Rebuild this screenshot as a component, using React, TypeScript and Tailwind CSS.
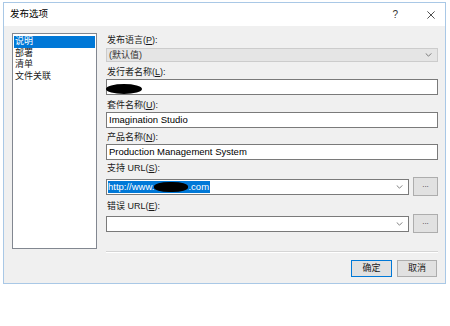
// App.tsx
// A Windows-style "发布选项" dialog: title bar, a page list on the left and the form fields on the right.
const FONT = { fontFamily: '"Liberation Sans", "Noto Sans CJK SC", sans-serif' };

const Chevron = () => (
  <svg viewBox="0 0 8 5" className="h-[4px] w-[7px]" fill="none" stroke="#606060" strokeWidth="1">
    <path d="M0.5 0.5 4 4 7.5 0.5" />
  </svg>
);

// Label with an access-key letter underlined, e.g. 发布语言(P):
const Label = ({ pre, k, className = "" }: { pre: string; k: string; className?: string }) => (
  <div className={`flex h-[13px] items-center pl-[1px] text-[9px] leading-none text-[#1a1a1a] ${className}`}>
    {pre}(<span className="underline">{k}</span>):
  </div>
);

const TextBox = ({ children, className = "" }: { children?: React.ReactNode; className?: string }) => (
  <div className={`relative flex h-[16px] items-center border border-[#7a7a7a] bg-white px-[2px] text-[9.5px] leading-none text-black ${className}`}>
    {children}
  </div>
);

const Browse = () => (
  <div className="flex h-[19px] w-[25px] shrink-0 items-center justify-center border border-[#adadad] bg-[#e1e1e1] pb-[3px] text-[8px] text-[#333]">
    ...
  </div>
);

const PAGES = ["说明", "部署", "清单", "文件关联"];

export default function App() {
  return (
    <div className="h-[326px] w-[450px] bg-white" style={FONT}>
      <div className="ml-[3px] pt-[2px]">
        <div className="flex h-[282px] w-[443px] flex-col border border-[#a9c8e6] bg-[#f0f0f0]">
          {/* Title bar */}
          <div className="flex h-[23px] shrink-0 items-center bg-white pl-[6px] text-[9.5px] text-black">
            <span>发布选项</span>
            <span className="ml-auto mr-[29px] text-[10px] text-[#333]">?</span>
            <svg viewBox="0 0 10 10" className="mr-[10px] h-[8px] w-[8px]" stroke="#222" strokeWidth="1">
              <path d="M0.5 0.5 9.5 9.5M9.5 0.5 0.5 9.5" />
            </svg>
          </div>

          <div className="flex flex-1 pl-[8px] pr-[7px] pt-[7px]">
            {/* Page list */}
            <div className="h-[216px] w-[85px] shrink-0 border border-[#828790] bg-white p-[1px] pt-[2px] text-[9px] leading-none">
              {PAGES.map((p, i) => (
                <div
                  key={p}
                  className={`flex h-[11.5px] items-center pl-[1px] ${i === 0 ? "bg-[#0078d7] text-white" : "text-[#1a1a1a]"}`}
                >
                  {p}
                </div>
              ))}
            </div>

            {/* Form */}
            <div className="ml-[9px] flex flex-1 flex-col pt-[1px]">
              <Label pre="发布语言" k="P" />
              <div className="mt-[1px] flex h-[14px] items-center justify-between border border-[#cccccc] bg-[#e5e5e5] pl-[2px] pr-[5px] text-[9px] leading-none text-[#333]">
                <span>(默认值)</span>
                <Chevron />
              </div>

              <Label pre="发行者名称" k="L" className="mt-[4px]" />
              <TextBox>
                <span className="absolute bottom-[0px] left-[-1px] h-[10px] w-[36px] rounded-[50%] bg-black" />
              </TextBox>

              <Label pre="套件名称" k="U" className="mt-[4px]" />
              <TextBox>Imagination Studio</TextBox>

              <Label pre="产品名称" k="N" className="mt-[3px]" />
              <TextBox>Production Management System</TextBox>

              <Label pre="支持 URL" k="S" className="mt-[2px]" />
              <div className="mt-[2px] flex h-[19px] items-center gap-[4px]">
                <TextBox className="flex-1 justify-between pl-[1px] pr-[5px]">
                  <span className="flex h-[12px] items-center bg-[#0078d7] pr-[1px] text-white">
                    http://www.
                    <span className="h-[10px] w-[34px] rounded-[45%] bg-black" />
                    .com
                  </span>
                  <Chevron />
                </TextBox>
                <Browse />
              </div>

              <Label pre="错误 URL" k="E" className="mt-[4px]" />
              <div className="mt-[1px] flex h-[19px] items-center gap-[4px]">
                <TextBox className="flex-1 justify-end pr-[5px]">
                  <Chevron />
                </TextBox>
                <Browse />
              </div>

              <div className="mt-[18px] h-[1px] bg-[#d5d5d5]" />
              <div className="h-[1px] bg-white" />

              <div className="mt-[7px] flex justify-end gap-[5px] pr-[1px] text-[9px] leading-none text-[#1a1a1a]">
                <div className="flex h-[17px] w-[41px] items-center justify-center border border-[#0078d7] bg-[#e1e1e1]">
                  确定
                </div>
                <div className="flex h-[17px] w-[40px] items-center justify-center border border-[#adadad] bg-[#e1e1e1]">
                  取消
                </div>
              </div>
            </div>
          </div>
        </div>
      </div>
    </div>
  );
}
